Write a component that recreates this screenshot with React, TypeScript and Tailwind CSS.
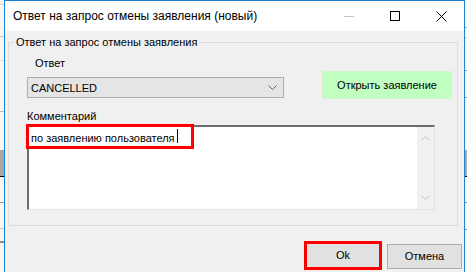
import type { FC, ReactNode } from "react";

const font = { fontFamily: '"Liberation Sans", Arial, sans-serif' };

// background rows peeking out on both sides of the dialog
const SideStrip: FC<{ width: string; children?: ReactNode }> = ({ width, children }) => (
  <div className={`${width} h-[272px] bg-[#f7f7f7] flex flex-col shrink-0 overflow-hidden`}>{children}</div>
);

const LeftBg = () => (
  <SideStrip width="w-[4px]">
    <div className="h-[5px] border-b border-[#d9d9d9]" />
    <div className="h-[32px] border-b border-[#c8c8c8]" />
    <div className="h-[24px] border-b border-[#e0e0e0]" />
    <div className="h-[51px] border-b border-[#bdbdbd]" />
    <div className="h-[38px]" />
    <div className="h-[27px] bg-[#a8a8a8] border-b border-black" />
    <div className="h-[26px] border-b border-[#9a9a9a]" />
    <div className="h-[26px] border-b border-[#c8c8c8]" />
    <div className="h-[14px] border-b-2 border-[#8c8c8c]" />
  </SideStrip>
);

const RightBg = () => (
  <SideStrip width="w-[2px]">
    <div className="h-[28px] border-b border-[#9fb8d8]" />
    <div className="h-[10px] border-b border-[#c8c8c8]" />
    <div className="h-[33px] border-b border-[#8c8c8c]" />
    <div className="h-[27px] border-b border-[#8c8c8c]" />
    <div className="h-[52px]" />
    <div className="h-[27px] bg-[#a8a8a8] border-b border-black" />
    <div className="h-[26px] border-b border-[#8c8c8c]" />
    <div className="h-[27px] border-b border-[#8c8c8c]" />
  </SideStrip>
);

const TitleBar = () => (
  <div className="h-[30px] bg-white flex items-center">
    <span className="pl-[8px] text-[12px] text-black flex-1 whitespace-nowrap">
      Ответ на запрос отмены заявления (новый)
    </span>
    <div className="w-[46px] h-[30px] flex items-center justify-center">
      <div className="w-[10px] h-px bg-[#c4c4c4]" />
    </div>
    <div className="w-[46px] h-[30px] flex items-center justify-center">
      <div className="w-[10px] h-[10px] border border-black" />
    </div>
    <div className="w-[46px] h-[30px] flex items-center justify-center">
      <svg width="11" height="11" viewBox="0 0 11 11">
        <path d="M0.5 0.5 L10.5 10.5 M10.5 0.5 L0.5 10.5" stroke="#000" strokeWidth="1" />
      </svg>
    </div>
  </div>
);

const Chevron: FC<{ up?: boolean; color?: string }> = ({ up, color = "#606060" }) => (
  <svg width="9" height="5" viewBox="0 0 9 5">
    <path d={up ? "M0.5 4.5 L4.5 0.5 L8.5 4.5" : "M0.5 0.5 L4.5 4.5 L8.5 0.5"} fill="none" stroke={color} strokeWidth="1" />
  </svg>
);

const App = () => {
  return (
    <div className="w-[467px] h-[272px] flex overflow-hidden text-black" style={font}>
      <LeftBg />

      {/* dialog window */}
      <div className="w-[461px] h-[272px] border-t border-x border-[#1883d7] flex flex-col bg-[#f0f0f0] shrink-0">
        <TitleBar />

        <fieldset className="ml-[3px] mt-[3px] w-[450px] border border-[#dcdcdc] pl-[18px] pr-[5px] pb-[15px] pt-0 m-0">
          <legend className="ml-[-13px] px-[2px] text-[11px] leading-[16px]">Ответ на запрос отмены заявления</legend>

          <div className="flex items-start justify-between mt-[5px]">
            <div className="flex flex-col">
              <span className="ml-[8px] text-[11px] leading-[16px]">Ответ</span>
              <div className="mt-[6px] w-[257px] h-[21px] bg-[#e5e5e5] border border-[#adadad] flex items-center pl-[3px] pr-[6px]">
                <span className="flex-1 text-[11px] leading-[16px]">CANCELLED</span>
                <Chevron />
              </div>
            </div>
            <div className="mt-[16px] w-[130px] h-[28px] bg-[#c0ffc0] border border-[#d2f4d2] flex items-center justify-center text-[11px]">
              Открыть заявление
            </div>
          </div>

          <div className="mt-[9px] text-[11px] leading-[16px]">Комментарий</div>

          <div className="relative mt-px w-[408px] h-[85px] bg-white border-t-2 border-l-2 border-t-[#6d6d6d] border-l-[#6d6d6d] border-b border-r border-b-[#e3e3e3] border-r-[#e3e3e3] flex">
            <div className="flex-1 pl-[2px] pt-[3px] text-[11px] leading-[16px] flex items-start">
              <span>по заявлению пользователя</span>
              <span className="ml-[2px] mt-[-1px] w-px h-[14px] bg-black" />
            </div>
            <div className="w-[17px] bg-[#f0f0f0] flex flex-col items-center justify-between py-[9px]">
              <Chevron up color="#c2c2c2" />
              <Chevron color="#c2c2c2" />
            </div>
            {/* highlight annotation */}
            <div className="absolute left-[-3px] top-[-3px] w-[168px] h-[25px] border-[3px] border-[#ff0000]" />
          </div>
        </fieldset>

        <div className="mt-[15px] flex justify-end items-start pr-[2px] gap-[5px]">
          <div className="w-[78px] h-[29px] border-[3px] border-[#ff0000] bg-[#e1e1e1] flex items-center justify-center text-[11px]">
            Ok
          </div>
          <div className="mt-[3px] w-[75px] h-[25px] border border-[#adadad] bg-[#e1e1e1] flex items-center justify-center text-[11px]">
            Отмена
          </div>
        </div>
      </div>

      <RightBg />
    </div>
  );
};

export default App;
